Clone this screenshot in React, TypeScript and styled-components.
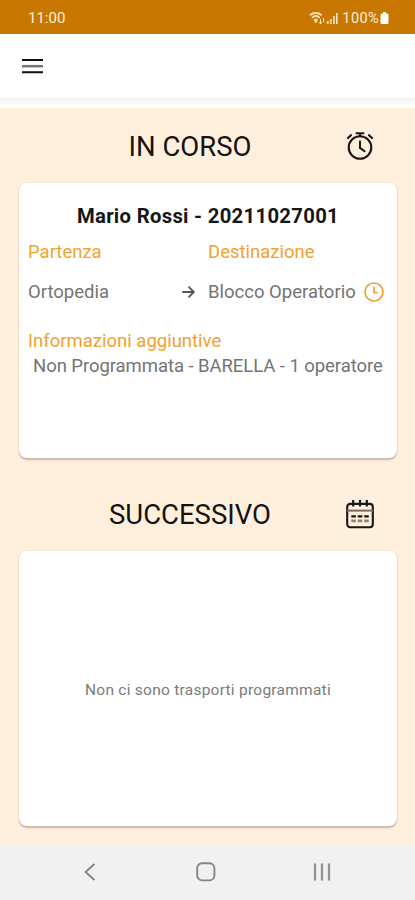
import React from "react";
import styled, { createGlobalStyle } from "styled-components";

const GlobalStyle = createGlobalStyle`
  * { box-sizing: border-box; }
  body { margin: 0; background: #fff0de; font-family: Roboto, "Liberation Sans", sans-serif; }
`;

const Screen = styled.div`
  display: flex;
  flex-direction: column;
  width: 415px;
  height: 900px;
  overflow: hidden;
  background: #fff0de;
`;

const StatusBar = styled.div`
  display: flex;
  align-items: center;
  height: 34px;
  padding: 2px 26px 0 28px;
  background: #c87800;
  color: #fff0dc;
  font-size: 15px;
  line-height: 18px;
`;

const Clock = styled.span`
  flex: 1;
`;

const StatusIcons = styled.div`
  display: flex;
  align-items: center;
`;

const BatteryLevel = styled.span`
  margin: 1px 1px 0 3px;
  font-size: 14.5px;
  letter-spacing: 0.4px;
`;

const Header = styled.header`
  display: flex;
  align-items: center;
  flex-shrink: 0;
  height: 74px;
  padding: 0 22px 10px;
  background: linear-gradient(#fff 0 63px, #f3f3f3 65px, #f6f6f6 67px, #fdfdfd 71px, #fff 74px);
`;

const MenuButton = styled.button`
  display: flex;
  padding: 0;
  border: 0;
  background: none;
`;

const Content = styled.main`
  flex: 1;
  padding: 0 18px 0 19px;
`;

const SectionHeader = styled.div<{ $height: number; $gap: number }>`
  display: grid;
  grid-template-columns: 1fr 30px;
  align-items: center;
  height: ${(p) => p.$height}px;
  padding: ${(p) => p.$gap}px 22px 0 0;
`;

const SectionTitle = styled.h2`
  margin: 0;
  padding: 2px 0 0 16px;
  color: #151310;
  font-size: 27.5px;
  font-weight: 400;
  line-height: 32px;
  text-align: center;
`;

const Card = styled.section`
  height: 275px;
  border-radius: 8px;
  background: #fff;
  box-shadow: 0 1.5px 2px rgba(70, 55, 35, 0.3), 0 0 3px rgba(90, 75, 55, 0.06);
`;

const TransportCard = styled(Card)`
  padding: 20px 9px 0;
`;

const EmptyCard = styled(Card)`
  display: flex;
  align-items: center;
  justify-content: center;
  padding-top: 2px;
  color: #7b7b7b;
  font-size: 15.5px;
  letter-spacing: 0.25px;
`;

const PatientTitle = styled.h3`
  margin: 0;
  color: #161616;
  font-size: 20.3px;
  font-weight: 700;
  line-height: 26px;
  letter-spacing: 0.3px;
  text-align: center;
  white-space: nowrap;
`;

const RouteGrid = styled.div`
  display: grid;
  grid-template-columns: 153px 27px 155px 22px;
  grid-template-rows: 45px 35px;
  align-items: center;
`;

const Label = styled.div<{ $wide?: boolean }>`
  color: #f0a32d;
  font-size: 18.5px;
  line-height: 24px;
  grid-column: ${(p) => (p.$wide ? "span 2" : "auto")};
`;

const Value = styled.div`
  color: #747474;
  font-size: 18.5px;
  line-height: 24px;
  white-space: nowrap;
`;

const ExtraInfo = styled.div`
  padding-top: 20px;
`;

const ExtraValue = styled(Value)`
  padding-left: 5px;
  line-height: 26px;
  letter-spacing: -0.06px;
`;

const NavBar = styled.nav`
  display: grid;
  grid-template-columns: repeat(3, 116px);
  justify-content: center;
  align-items: center;
  justify-items: center;
  height: 55px;
  padding: 0 3px 2px 0;
  background: #f1f1f1;
`;

const Icon = styled.svg`
  display: block;
  fill: none;
  flex-shrink: 0;
`;

const MenuIcon = () => (
  <Icon width="22" height="16" viewBox="0 0 22 16">
    <path d="M0 2h21M0 14.3h21" stroke="#111" strokeWidth="2" />
    <path d="M0 8.2h21" stroke="#777" strokeWidth="2.5" />
  </Icon>
);

const WifiIcon = () => (
  <Icon width="17" height="14" viewBox="0 0 17 14">
    <path d="M1 4.2C4.3 1.3 9.2 1.3 12.7 4.2M3 6.7c2.4-2 5.4-2 7.7 0M5.2 9.2c1.1-.8 2.2-.8 3.3 0" stroke="#fbdfba" strokeWidth="1.9" />
    <path d="m6.9 12.3-2-2.7h3.8z" fill="#fff0dc" />
    <path d="M11.5 8.2v4.6m-1.5-1.6 1.5 1.6 1.4-1.6M14.5 11V7" stroke="#fff0dc" />
  </Icon>
);

const SignalIcon = () => (
  <Icon width="13" height="12" viewBox="0 0 13 12">
    <path d="M1.7 9v3M4.8 7v5M8 4v8" stroke="#f3cda0" strokeWidth="2" />
    <path d="M10.8 1v11" stroke="#fff0dc" strokeWidth="1.5" />
  </Icon>
);

const BatteryIcon = () => (
  <Icon width="9" height="12" viewBox="0 0 9 12">
    <path d="M3 0h3v1.5h1.2Q8.5 1.5 8.5 3v7.8q0 1.2-1.2 1.2H1.7Q.5 12 .5 10.8V3Q.5 1.5 1.8 1.5H3z" fill="#fff" />
  </Icon>
);

const StopwatchIcon = () => (
  <Icon width="30" height="30" viewBox="0 0 30 30" stroke="#1b1718" strokeLinecap="round">
    <circle cx="15" cy="16.5" r="11.3" strokeWidth="2.1" />
    <path d="M11.5 2.2h7M15 2.2v3M15 10.5v6.4l4.5 3.2" strokeWidth="2.1" />
    <path d="m3 7 3-2.8M27 7l-3-2.8" strokeWidth="2.2" />
  </Icon>
);

const CalendarIcon = () => (
  <Icon width="30" height="30" viewBox="0 0 30 30" stroke="#1b1718">
    <rect x="2.2" y="4.9" width="25.6" height="23.3" rx="3" strokeWidth="2.1" />
    <path d="M8.2 1v6.5M15 1v6.5M21.8 1v6.5" strokeWidth="2.2" />
    <path d="M2 11.6h26" stroke="#756c63" strokeWidth="2" />
    <path d="M6.3 17.3h4.6M12.7 17.3h4.6M19.2 17.3h4.6" strokeWidth="2.2" />
    <path d="M6.3 21.8h4.6M12.7 21.8h4.6M19.2 21.8h4.6" stroke="#8c8478" strokeWidth="2.7" />
  </Icon>
);

const ArrowIcon = () => (
  <Icon width="15" height="14" viewBox="0 0 15 14" stroke="#555" strokeWidth="1.8">
    <path d="M1.3 7h11.4M7.5 1.6 12.9 7l-5.4 5.4" />
  </Icon>
);

const ClockIcon = () => (
  <Icon width="22" height="22" viewBox="0 0 22 22" stroke="#e9a02f" strokeWidth="1.6">
    <circle cx="11" cy="11" r="9" />
    <path d="M11 5.5v6h3.8" />
  </Icon>
);

const BackIcon = () => (
  <Icon width="20" height="20" viewBox="0 0 20 20" stroke="#858585" strokeWidth="1.9">
    <path d="M14.4 2 5.6 10l8.8 8" />
  </Icon>
);

const HomeIcon = () => (
  <Icon width="20" height="20" viewBox="0 0 20 20" stroke="#858585" strokeWidth="1.9">
    <rect x="1.2" y="1.2" width="17.2" height="17.2" rx="5" />
  </Icon>
);

const RecentsIcon = () => (
  <Icon width="20" height="20" viewBox="0 0 20 20" stroke="#929292" strokeWidth="2.3">
    <path d="M3 1.5v17M10 1.5v17M17 1.5v17" />
  </Icon>
);

export default function App() {
  return (
    <Screen>
      <GlobalStyle />
      <StatusBar>
        <Clock>11:00</Clock>
        <StatusIcons>
          <WifiIcon />
          <SignalIcon />
          <BatteryLevel>100%</BatteryLevel>
          <BatteryIcon />
        </StatusIcons>
      </StatusBar>
      <Header>
        <MenuButton aria-label="Menu">
          <MenuIcon />
        </MenuButton>
      </Header>
      <Content>
        <SectionHeader $height={75} $gap={0}>
          <SectionTitle>IN CORSO</SectionTitle>
          <StopwatchIcon />
        </SectionHeader>
        <TransportCard>
          <PatientTitle>Mario Rossi - 20211027001</PatientTitle>
          <RouteGrid>
            <Label $wide>Partenza</Label>
            <Label $wide>Destinazione</Label>
            <Value>Ortopedia</Value>
            <ArrowIcon />
            <Value>Blocco Operatorio</Value>
            <ClockIcon />
          </RouteGrid>
          <ExtraInfo>
            <Label>Informazioni aggiuntive</Label>
            <ExtraValue>Non Programmata - BARELLA - 1 operatore</ExtraValue>
          </ExtraInfo>
        </TransportCard>
        <SectionHeader $height={93} $gap={19}>
          <SectionTitle>SUCCESSIVO</SectionTitle>
          <CalendarIcon />
        </SectionHeader>
        <EmptyCard>Non ci sono trasporti programmati</EmptyCard>
      </Content>
      <NavBar>
        <BackIcon />
        <HomeIcon />
        <RecentsIcon />
      </NavBar>
    </Screen>
  );
}
